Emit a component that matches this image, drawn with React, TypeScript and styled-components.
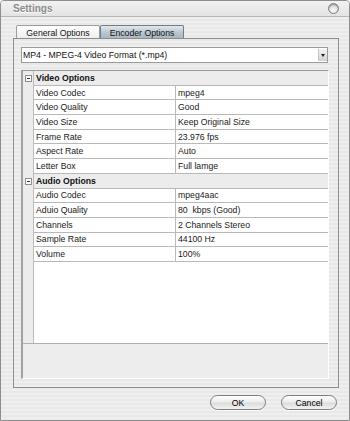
import React from 'react';
import styled, { createGlobalStyle } from 'styled-components';

const Global = createGlobalStyle`
  html, body { margin: 0; padding: 0; background: #ffffff; }
  * { box-sizing: border-box; }
  body { font-family: "Liberation Sans", Arial, sans-serif; }
`;

const stripes = `repeating-linear-gradient(180deg, #efefef 0px, #efefef 2px, #e8e8e8 2px, #e8e8e8 4px)`;

const Window = styled.div`
  width: 350px;
  height: 421px;
  border: 1px solid #8e8e8e;
  border-radius: 4px 4px 0 0;
  background: ${stripes};
  display: flex;
  flex-direction: column;
  overflow: hidden;
`;

const TitleBar = styled.div`
  height: 16px;
  flex: none;
  display: flex;
  align-items: center;
  justify-content: space-between;
  padding: 0 10px 0 12px;
  border-bottom: 1px solid #b6b6b6;
  background: linear-gradient(#f2f2f2, #e3e3e3);
`;

const Title = styled.span`
  font-size: 10px;
  font-weight: 700;
  color: #8c8c8c;
  text-shadow: 0 1px 0 #ffffff;
`;

const CloseButton = styled.span`
  width: 11px;
  height: 11px;
  border-radius: 50%;
  border: 1px solid #7e7e7e;
  background: radial-gradient(circle at 50% 70%, #ffffff 0%, #dcdcdc 55%, #b4b4b4 100%);
  box-shadow: inset 0 1px 1px rgba(0, 0, 0, 0.25);
`;

const Body = styled.div`
  flex: 1;
  display: flex;
  flex-direction: column;
  padding: 8px 10px 0 12px;
`;

const TabRow = styled.div`
  display: flex;
  height: 13px;
  padding-left: 3px;
`;

const Tab = styled.div<{ $active?: boolean; $w: number }>`
  width: ${(p) => p.$w}px;
  height: 13px;
  display: flex;
  align-items: center;
  justify-content: center;
  border: 1px solid ${(p) => (p.$active ? '#6f7d89' : '#9d9d9d')};
  border-bottom: none;
  border-radius: 2px 2px 0 0;
  background: ${(p) =>
    p.$active ? 'linear-gradient(#e3e9ee, #b9c6d0 55%, #a9b7c2)' : 'linear-gradient(#ffffff, #eeeeee)'};
  font-size: 8.7px;
  color: #111111;
  padding-top: 1px;
`;

const Panel = styled.div`
  width: 326px;
  height: 350px;
  flex: none;
  border: 1px solid #8d8d8d;
  display: flex;
  flex-direction: column;
  padding: 8px 0 8px 7px;
`;

const Select = styled.div`
  width: 307px;
  height: 16px;
  flex: none;
  border: 1px solid #9b9b9b;
  background: #ffffff;
  display: flex;
  align-items: center;
  justify-content: space-between;
  padding: 0 0 0 1px;
  font-size: 8.7px;
  color: #111111;
`;

const SelectArrow = styled.span`
  width: 9px;
  height: 12px;
  display: flex;
  align-items: center;
  justify-content: center;
  background: linear-gradient(#f4f4f4, #d2d2d2);
  border-left: 1px solid #c4c4c4;
  &::after {
    content: '';
    border-left: 2.5px solid transparent;
    border-right: 2.5px solid transparent;
    border-top: 3px solid #222222;
  }
`;

const Grid = styled.div`
  width: 308px;
  height: 309px;
  margin-top: 7px;
  flex: none;
  display: flex;
  flex-direction: column;
  border-top: 1px solid #9a9a9a;
  border-left: 2px solid #a2a2a2;
  border-right: 1px solid #ffffff;
  border-bottom: 1px solid #ffffff;
`;

const List = styled.div`
  height: 272px;
  flex: none;
  background: linear-gradient(to right, #ececec 0px, #ececec 10px, #bcbcbc 10px, #bcbcbc 11px, #ffffff 11px);
  display: flex;
  flex-direction: column;
`;

const Row = styled.div`
  height: 14.7px;
  flex: none;
  display: grid;
  grid-template-columns: 11px 142px 1fr;
`;

const Gutter = styled.div`
  display: flex;
  align-items: center;
  padding-left: 2px;
`;

const MinusBox = styled.span`
  width: 7px;
  height: 7px;
  border: 1px solid #8e8e8e;
  background: #ffffff;
  display: flex;
  align-items: center;
  justify-content: center;
  &::after {
    content: '';
    width: 3px;
    height: 1px;
    background: #333333;
  }
`;

const HeaderCell = styled.div`
  grid-column: 2 / 4;
  background: #ececec;
  border-bottom: 1px solid #b9b9b9;
  font-size: 8.7px;
  font-weight: 700;
  color: #111111;
  display: flex;
  align-items: center;
  padding-left: 2px;
`;

const Cell = styled.div<{ $label?: boolean }>`
  border-bottom: 1px solid #b9b9b9;
  border-right: ${(p) => (p.$label ? '1px solid #b9b9b9' : 'none')};
  font-size: 8.7px;
  color: #1a1a1a;
  display: flex;
  align-items: center;
  padding-left: 2px;
  white-space: pre;
`;

const Description = styled.div`
  flex: 1;
  background: #ededed;
  border-top: 1px solid #b0b0b0;
`;

const Footer = styled.div`
  display: flex;
  justify-content: flex-end;
  gap: 15px;
  margin-top: 7px;
  padding-right: 2px;
`;

const Button = styled.button`
  width: 56px;
  height: 15px;
  border: 1px solid #7c7c7c;
  border-radius: 8px;
  background: linear-gradient(#ffffff, #ededed 45%, #dcdcdc 55%, #f3f3f3);
  font-family: "Liberation Sans", Arial, sans-serif;
  font-size: 8.7px;
  color: #000000;
  padding: 0;
  display: flex;
  align-items: center;
  justify-content: center;
  box-shadow: 0 1px 0 rgba(255, 255, 255, 0.8);
`;

const video: [string, string][] = [
  ['Video Codec', 'mpeg4'],
  ['Video Quality', 'Good'],
  ['Video Size', 'Keep Original Size'],
  ['Frame Rate', '23.976 fps'],
  ['Aspect Rate', 'Auto'],
  ['Letter Box', 'Full lamge'],
];

const audio: [string, string][] = [
  ['Audio Codec', 'mpeg4aac'],
  ['Aduio Quality', '80  kbps (Good)'],
  ['Channels', '2 Channels Stereo'],
  ['Sample Rate', '44100 Hz'],
  ['Volume', '100%'],
];

const Section = ({ title, items }: { title: string; items: [string, string][] }) => (
  <>
    <Row>
      <Gutter>
        <MinusBox />
      </Gutter>
      <HeaderCell>{title}</HeaderCell>
    </Row>
    {items.map(([k, v]) => (
      <Row key={k}>
        <Gutter />
        <Cell $label>{k}</Cell>
        <Cell>{v}</Cell>
      </Row>
    ))}
  </>
);

export default function App() {
  return (
    <>
      <Global />
      <Window>
        <TitleBar>
          <Title>Settings</Title>
          <CloseButton />
        </TitleBar>
        <Body>
          <TabRow>
            <Tab $w={84}>General Options</Tab>
            <Tab $w={84} $active>
              Encoder Options
            </Tab>
          </TabRow>
          <Panel>
            <Select>
              <span>MP4 - MPEG-4 Video Format (*.mp4)</span>
              <SelectArrow />
            </Select>
            <Grid>
              <List>
                <Section title="Video Options" items={video} />
                <Section title="Audio Options" items={audio} />
              </List>
              <Description />
            </Grid>
          </Panel>
          <Footer>
            <Button>OK</Button>
            <Button>Cancel</Button>
          </Footer>
        </Body>
      </Window>
    </>
  );
}
